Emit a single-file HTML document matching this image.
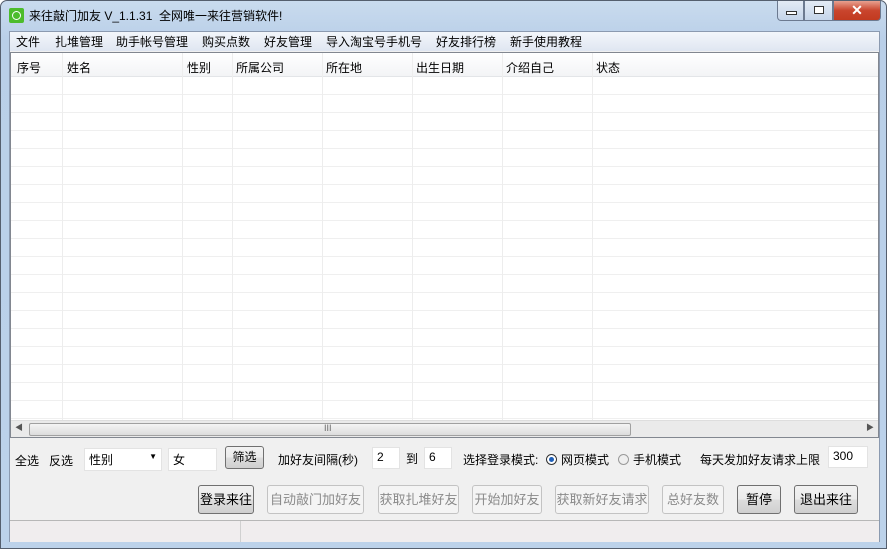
<!DOCTYPE html>
<html><head><meta charset="utf-8"><style>
*{margin:0;padding:0;box-sizing:border-box}
body{width:887px;height:549px;overflow:hidden;font-family:"Liberation Sans","Noto Sans CJK SC",sans-serif;font-size:12px;color:#000;background:#fff}
.win{position:absolute;left:0;top:0;width:887px;height:549px;background:linear-gradient(#c9dbee,#b9cfe8 40px,#bcd2ea);border:1px solid #555f6e;border-radius:7px 7px 0 0}
.title{position:absolute;left:28px;top:6px;font-size:12px;color:#000}
.ico{position:absolute;left:8px;top:7px;width:15px;height:15px;background:#4cbc2c;border-radius:2px}
.ico:after{content:"";position:absolute;left:3px;top:3px;width:7px;height:7px;border:1px solid #fff;border-radius:50%}
.ctl{position:absolute;top:0;height:20px;border:1px solid #6c7a90;border-top:none}
.client{position:absolute;left:8px;top:30px;width:871px;height:511px;background:#f0f0f0;border:1px solid #8b9ab0}
.menu{position:absolute;left:0;top:0;width:100%;height:19px;background:linear-gradient(#f3f6fb,#dfe6f1);}
.menu span{position:absolute;top:1px;font-size:12px}
.table{position:absolute;left:0;top:20px;width:869px;height:386px;background:#fff;border:1px solid #828790}
.hdr{position:absolute;left:0;top:0;width:100%;height:24px;background:linear-gradient(#fff,#f3f4f6);border-bottom:1px solid #e3e5e8}
.hdr span{position:absolute;top:6px;font-size:12px}
.col{position:absolute;top:0;width:1px;height:368px;background:#ededed}
.sb{position:absolute;left:0;bottom:0;width:100%;height:17px;background:#eaeaea;border-top:1px solid #ddd}
.thumb{position:absolute;left:18px;top:2px;width:602px;height:13px;border:1px solid #a0a0a0;border-radius:2px;background:linear-gradient(#f4f4f4,#dcdcdc)}
.t{position:absolute;font-size:12px}
.inp{position:absolute;background:#fff;border:1px solid #e3e3e3;height:22px;font-size:12px;padding:2px 4px}
.btn{position:absolute;height:29px;border:1px solid #707070;border-radius:3px;background:linear-gradient(#f2f2f2,#ebebeb 50%,#dddddd 51%,#cfcfcf);font-size:13px;text-align:center;line-height:27px}
.dis{border-color:#c3c3c3;background:#f4f4f4;color:#8a8a8a}
.status{position:absolute;left:0;top:488px;width:100%;height:22px;background:#f0edee;border-top:1px solid #b7b7b7}
</style></head><body>
<div class="win">
<div class="ico"></div>
<div class="title">来往敲门加友 V_1.1.31&nbsp; 全网唯一来往营销软件!</div>
<div class="ctl" style="left:776px;width:27px;background:linear-gradient(#e3ebf5,#c5d5ea);border-radius:0 0 0 4px"><div style="position:absolute;left:8px;top:10px;width:11px;height:4px;border:1px solid #333;background:#fff"></div></div>
<div class="ctl" style="left:803px;width:29px;background:linear-gradient(#e3ebf5,#c5d5ea)"><div style="position:absolute;left:9px;top:5px;width:10px;height:8px;border:1px solid #333;background:#fff"></div></div>
<div class="ctl" style="left:832px;width:48px;background:linear-gradient(#e8a190,#c9452d 50%,#c23a20);border-radius:0 0 4px 0;color:#fff;font-weight:bold;font-size:14px;text-align:center;line-height:18px">✕</div>
<div class="client">
<div class="menu">
<span style="left:6px">文件</span><span style="left:45px">扎堆管理</span><span style="left:106px">助手帐号管理</span><span style="left:192px">购买点数</span><span style="left:254px">好友管理</span><span style="left:316px">导入淘宝号手机号</span><span style="left:426px">好友排行榜</span><span style="left:500px">新手使用教程</span>
</div>
<div class="table">
<div class="hdr"><span style="left:6px">序号</span><span style="left:56px">姓名</span><span style="left:176px">性别</span><span style="left:225px">所属公司</span><span style="left:315px">所在地</span><span style="left:405px">出生日期</span><span style="left:495px">介绍自己</span><span style="left:585px">状态</span></div>
<div style="position:absolute;left:0;top:24px;width:100%;height:344px;background:repeating-linear-gradient(#fff 0,#fff 17px,#efefef 17px,#efefef 18px)"></div>
<div class="col" style="left:51px"></div><div class="col" style="left:171px"></div><div class="col" style="left:221px"></div><div class="col" style="left:311px"></div><div class="col" style="left:401px"></div><div class="col" style="left:491px"></div><div class="col" style="left:581px"></div>
<div class="sb"><span style="position:absolute;left:4px;top:1px;font-size:8px;color:#555">◀</span><div class="thumb"><span style="position:absolute;left:294px;top:-1px;font-size:9px;color:#666">III</span></div><span style="position:absolute;right:4px;top:1px;font-size:8px;color:#555">▶</span></div>
</div>
<span class="t" style="left:5px;top:420px">全选</span><span class="t" style="left:39px;top:420px">反选</span>
<div class="inp" style="left:74px;top:416px;width:78px;height:23px">性别<span style="position:absolute;right:4px;top:3px;font-size:8px">▼</span></div>
<div class="inp" style="left:158px;top:416px;width:49px;height:23px">女</div>
<div class="btn" style="left:215px;top:414px;width:39px;height:23px;line-height:21px;font-size:12px">筛选</div>
<span class="t" style="left:268px;top:419px">加好友间隔(秒)</span>
<div class="inp" style="left:362px;top:415px;width:28px">2</div>
<span class="t" style="left:396px;top:418px">到</span>
<div class="inp" style="left:414px;top:415px;width:28px">6</div>
<span class="t" style="left:453px;top:419px">选择登录模式:</span>
<span style="position:absolute;left:536px;top:422px;width:11px;height:11px;border:1px solid #333;border-radius:50%;background:#fff"><span style="position:absolute;left:2px;top:2px;width:5px;height:5px;border-radius:50%;background:#1e5fb8"></span></span>
<span class="t" style="left:551px;top:419px">网页模式</span>
<span style="position:absolute;left:608px;top:422px;width:11px;height:11px;border:1px solid #999;border-radius:50%;background:#eee"></span>
<span class="t" style="left:623px;top:419px">手机模式</span>
<span class="t" style="left:690px;top:419px">每天发加好友请求上限</span>
<div class="inp" style="left:818px;top:414px;width:40px">300</div>
<div class="btn" style="left:188px;top:453px;width:56px">登录来往</div>
<div class="btn dis" style="left:257px;top:453px;width:97px">自动敲门加好友</div>
<div class="btn dis" style="left:368px;top:453px;width:81px">获取扎堆好友</div>
<div class="btn dis" style="left:462px;top:453px;width:70px">开始加好友</div>
<div class="btn dis" style="left:545px;top:453px;width:94px">获取新好友请求</div>
<div class="btn dis" style="left:652px;top:453px;width:62px">总好友数</div>
<div class="btn" style="left:727px;top:453px;width:44px">暂停</div>
<div class="btn" style="left:784px;top:453px;width:64px">退出来往</div>
<div class="status"><div style="position:absolute;left:230px;top:0;width:1px;height:21px;background:#d0d0d0"></div></div>
</div>
</div>
</body></html>
